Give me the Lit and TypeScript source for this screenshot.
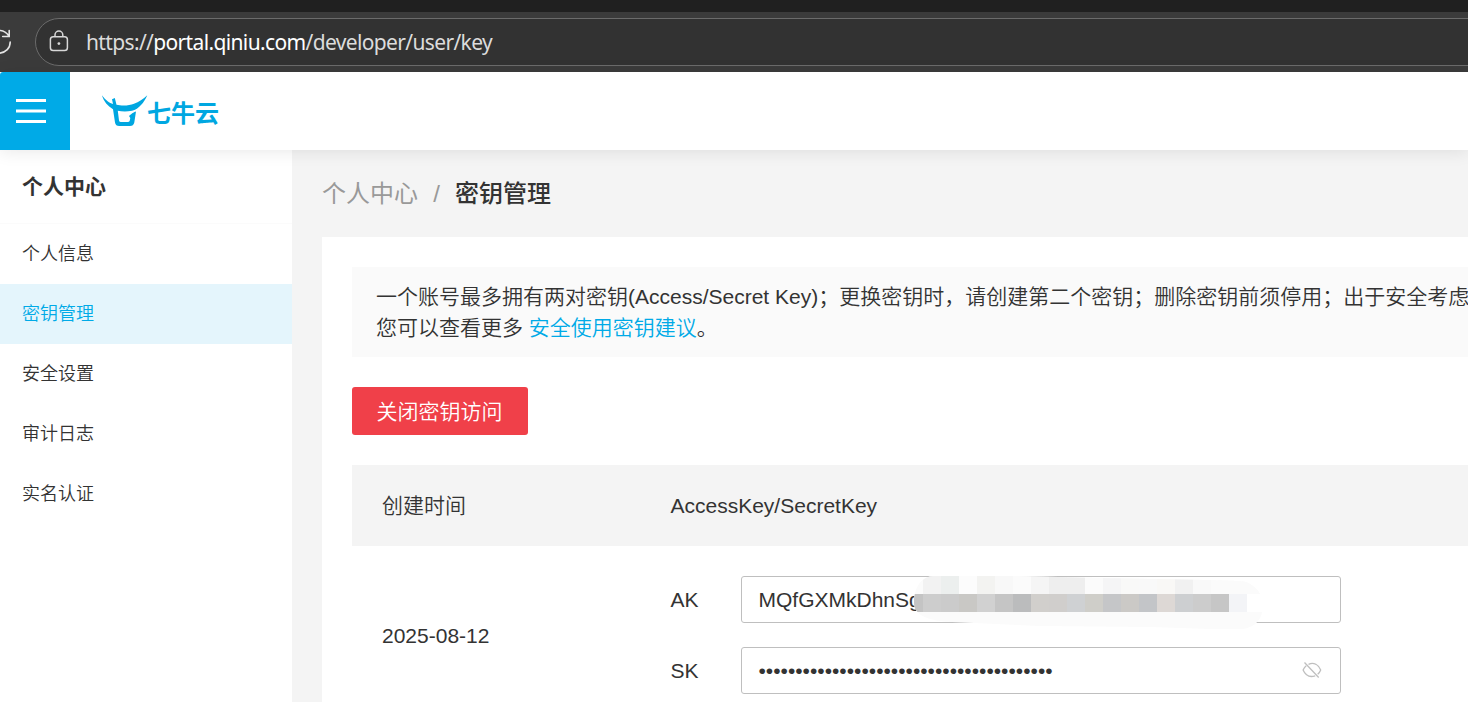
import { LitElement, html, css, svg } from "lit";
import { customElement } from "lit/decorators.js";

const menu = ["个人信息", "密钥管理", "安全设置", "审计日志", "实名认证"];
const topTiles = ["#f2f2f2", "#ecefee", "#fcfcfc", "#f3f3f1", "#f8f8f8", "#fbfbfb", "#f5f5f5", "#eeeeee", "#eeeeee", "#fbfbfb", "#f5f5f6", "#f9f9f8", "#f9f9f9", "#f9f8f6", "#f1f1f1", "#f9f9f9", "#fbfbfb", "#fbfbfb", "#fbfbfb"];
const midTiles = ["#cdcdcd", "#cbcbcb", "#c9c8c5", "#d1d1d1", "#c5c5c5", "#bbbcbd", "#d1cfcc", "#d0cecc", "#cfd1d3", "#cfcec9", "#c5c6c8", "#cbc9c6", "#c3c5c8", "#ddd8d5", "#cdcfd1", "#cccccc", "#c6c6c6", "#f3f4f7", "#ffffff"];

@customElement("app-root")
export class AppRoot extends LitElement {
  static styles = css`
    :host { display: flex; flex-direction: column; width: 100%; height: 100vh; overflow: hidden; background: #fff; color: #333; font: 21px/31.5px "Liberation Sans", "Noto Sans CJK SC", sans-serif; }
    * { box-sizing: border-box; }
    .tabs { flex: none; height: 12px; background: #202020; }
    .browser { flex: none; display: flex; height: 60px; background: #3b3b3b; padding-top: 6px; }
    .reload { flex: none; width: 35px; height: 48px; display: block; }
    .address { flex: none; width: 1500px; height: 48px; border: 1.5px solid #6b6b6b; border-radius: 24px; background: #323232; display: flex; align-items: center; padding-left: 13px; gap: 17px; }
    .lock { display: block; width: 20px; height: 24px; margin-top: -2px; }
    .url { font: 21px/30px "Noto Sans", "Open Sans", sans-serif; letter-spacing: -0.64px; color: #dcdcdc; white-space: nowrap; }
    .url b { font-weight: 400; color: #fff; }
    .header { flex: none; height: 78px; display: flex; background: #fff; box-shadow: 0 2px 16px rgba(0,0,0,.09); position: relative; z-index: 2; }
    .burger { width: 70px; height: 78px; background: #00aae7; display: block; border-top-left-radius: 3px; }
    .logo { display: flex; padding-left: 31px; align-items: flex-start; color: #00a7e1; }
    .bull { display: block; width: 47px; height: 34px; margin-top: 22px; }
    .brand { font: 700 24px/36px "Noto Sans CJK SC", sans-serif; margin: 22px 0 0 -1px; }
    .body { flex: 1; display: flex; min-height: 0; }
    .side { flex: none; width: 292px; background: #fff; display: flex; flex-direction: column; }
    .title { flex: none; height: 74px; padding-left: 22px; line-height: 73px; font-weight: 700; border-bottom: 1px solid #fbfbfb; }
    .item { height: 60px; line-height: 61px; padding-left: 22px; font-size: 18px; }
    .item.on { background: #e4f5fc; color: #00aae7; }
    .main { flex: 1; min-width: 0; overflow: hidden; background: #f4f4f4; padding-left: 30px; display: flex; flex-direction: column; }
    .crumbs { flex: none; height: 87px; line-height: 88px; font-size: 24px; display: flex; white-space: pre; color: #999; }
    .slash { width: 37px; text-align: center; }
    .now { color: #333; font-weight: 500; }
    .card { flex: 1; background: #fff; padding: 30px 0 0 30px; display: flex; flex-direction: column; align-items: flex-start; }
    .note { flex: none; width: 100%; height: 90px; background: #fafafa; padding: 13.5px 0 0 24px; white-space: nowrap; overflow: hidden; }
    .cjk, .note, .item { font-family: "Liberation Sans", "Noto Sans CJK SC DemiLight", "Noto Sans CJK SC", sans-serif; font-weight: 350; }
    .link { color: #00aae7; }
    .danger { flex: none; margin: 30px 0; width: 176px; height: 48px; border: 0; border-radius: 3px; background: #f04049; color: #fff; font: 350 21px/45px "Noto Sans CJK SC", sans-serif; padding: 0 1px 2px 0; }
    .thead { flex: none; width: 100%; height: 81px; background: #f4f4f4; display: flex; align-items: center; padding-left: 30px; }
    .col { width: 288.5px; }
    .row { flex: none; display: flex; padding: 30px 0 0 30px; }
    .date { width: 288.5px; line-height: 119px; }
    .keys { display: flex; flex-direction: column; gap: 24px; }
    .key { display: flex; align-items: center; height: 47px; }
    .label { width: 70.5px; }
    .field { width: 600px; height: 47px; border: 1px solid #bfbfbf; border-radius: 3px; display: flex; align-items: center; justify-content: space-between; padding: 0 18px 0 16.5px; position: relative; }
    .mosaic { position: absolute; left: 172px; top: -2px; width: 350px; height: 56px; display: block; }
    .eye { display: block; width: 20px; height: 18px; margin-top: -1px; }
  `;

  render() {
    return html`
      <div class="tabs"></div>
      <div class="browser">
        <svg class="reload" viewBox="0 0 35 48" fill="none" stroke="#e4e4e4" stroke-width="1.6" stroke-linecap="round">
          <path d="M-8 16C-3 11 4 11 9 18M9.200 12.500v6h-6.500M10.200 24C10.200 30 6 34.700-1 35.200"/>
        </svg>
        <div class="address">
          <svg class="lock" viewBox="0 0 20 24" fill="none" stroke="#d8d8d8" stroke-width="1.5">
            <rect x="1.400" y="7.700" width="17" height="13.800" rx="2.800"/><path d="M6 7.500V6a3.900 3.900 0 0 1 7.800 0v1.500"/><circle cx="9.900" cy="14.600" r="1.400" fill="#d8d8d8" stroke="none"/>
          </svg>
          <div class="url">https://<b>portal.qiniu.com</b>/developer/user/key</div>
        </div>
      </div>
      <div class="header">
        <svg class="burger" viewBox="0 0 70 78"><path fill="#fff" d="M16 27h30v3H16zM16 37.500h30v3H16zM16 48h30v3H16z"/></svg>
        <div class="logo">
          <svg class="bull" viewBox="0 0 47 34" fill="#00a7e1">
            <path d="M.8 1.200C5 6.500 8.500 9 12 10L11 5.200L13.800 4L15.500 10.800C20 11.900 28 12 33 9.800C38 7.800 42 5 46.300 1.200C43 8.500 38 15 31 16.800C25 18 20.500 17.600 16.800 16.700L18 26.500Q18.300 28 20 28H26.500Q28.500 28 28.800 26.500L29.300 24L28 22C29.700 21 30.500 19 35 17.500L33.300 28.500Q32.500 32 29 32H18.200Q14.600 32 14 28.500L12 15.200C6.500 12 3 7.500 .8 1.200Z"/>
          </svg>
          <div class="brand">七牛云</div>
        </div>
      </div>
      <div class="body">
        <div class="side">
          <div class="title">个人中心</div>
          ${menu.map((m, i) => html`<div class="item ${i === 1 ? "on" : ""}">${m}</div>`)}
        </div>
        <div class="main">
          <div class="crumbs"><span>个人中心</span><span class="slash">/</span><span class="now">密钥管理</span></div>
          <div class="card">
            <div class="note">
              <div>一个账号最多拥有两对密钥(Access/Secret Key)；更换密钥时，请创建第二个密钥；删除密钥前须停用；出于安全考虑</div>
              <div>您可以查看更多 <span class="link">安全使用密钥建议</span>。</div>
            </div>
            <button class="danger">关闭密钥访问</button>
            <div class="thead"><div class="col cjk">创建时间</div><div>AccessKey/SecretKey</div></div>
            <div class="row">
              <div class="date">2025-08-12</div>
              <div class="keys">
                <div class="key"><div class="label">AK</div>
                  <div class="field"><span>MQfGXMkDhnSg</span>
                    <svg class="mosaic" viewBox="914 575 350 56">
                      <defs><clipPath id="smear"><path d="M914 603C914 589 920 576 935 576H1015L1100 578L1210 580L1240 581C1250 582 1257 588 1260 594V612H1262C1261 621 1252 629 1241 629H1210L1150 627L1040 626L952 622C930 621 914 616 914 603Z"/></clipPath></defs>
                      <g clip-path="url(#smear)" shape-rendering="crispEdges">
                        <rect x="914" y="575" width="350" height="56" fill="#fbfbfb"/>
                        <rect x="914" y="594" width="9" height="18" fill="#c4c4c4"/>
                        ${topTiles.map((c, i) => svg`<rect x=${923 + i * 18} y="575" width="18" height="19" fill=${c} />`)}
                        ${midTiles.map((c, i) => svg`<rect x=${923 + i * 18} y="594" width="18" height="18" fill=${c} />`)}
                      </g>
                    </svg>
                  </div>
                </div>
                <div class="key"><div class="label">SK</div>
                  <div class="field"><span>${"•".repeat(40)}</span>
                    <svg class="eye" viewBox="0 0 20 18" fill="none" stroke="#bfbfbf" stroke-width="1.300"><path d="M6.500 3.300C12 1 16.500 4 18.700 9C18 10.800 17 12.200 15.700 13.300M13.200 14.800C7.500 16.700 3.200 13.800 1.100 9C1.900 7.200 2.900 5.800 4.200 4.700M2.500 1.500L16.700 16.500"/></svg>
                  </div>
                </div>
              </div>
            </div>
          </div>
        </div>
      </div>
    `;
  }
}
